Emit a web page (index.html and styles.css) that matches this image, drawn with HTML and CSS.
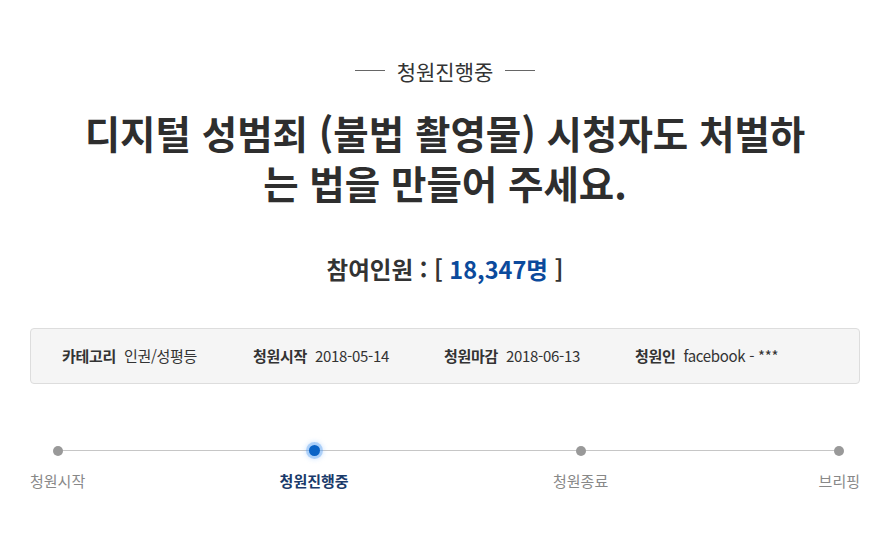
FILE: index.html
```html
<!DOCTYPE html>
<html lang="ko">
<head>
    <meta charset="UTF-8">
    <title>청원진행중</title>
    <link rel="stylesheet" href="styles.css">
</head>
<body>
    <div class="petition">
        <p class="status"><span>청원진행중</span></p>

        <h1 class="title">디지털 성범죄 (불법 촬영물) 시청자도 처벌하<br>는 법을 만들어 주세요.</h1>

        <p class="count">참여인원 : [ <span class="num">18,347명</span> ]</p>

        <ul class="info">
            <li><strong>카테고리</strong> 인권/성평등</li>
            <li><strong>청원시작</strong> 2018-05-14</li>
            <li><strong>청원마감</strong> 2018-06-13</li>
            <li><strong>청원인</strong> facebook - ***</li>
        </ul>

        <ol class="steps">
            <li class="step"><span class="dot"></span><span class="label">청원시작</span></li>
            <li class="step active"><span class="dot"></span><span class="label">청원진행중</span></li>
            <li class="step"><span class="dot"></span><span class="label">청원종료</span></li>
            <li class="step"><span class="dot"></span><span class="label">브리핑</span></li>
        </ol>
    </div>
</body>
</html>
```

FILE: styles.css
```css
body {
    margin: 0;
    font-family: "Noto Sans CJK KR", "Noto Sans", sans-serif;
    color: #333;
    background: #fff;
}
.petition {
    padding: 0 26px 0 30px;
}
.status {
    margin: 50px 0 0;
    text-align: center;
    font-size: 21px;
    line-height: 24px;
    color: #333;
}
.status span {
    display: inline-flex;
    align-items: center;
    gap: 12px;
}
.status span::before,
.status span::after {
    content: "";
    width: 30px;
    height: 1px;
    background: #666;
}
.title {
    margin: 24px 0 0;
    text-align: center;
    font-size: 38.5px;
    line-height: 50px;
    font-weight: 700;
    color: #2e2e2e;
}
.count {
    margin: 47px 0 0;
    text-align: center;
    font-size: 23.5px;
    line-height: 30px;
    font-weight: 700;
    color: #333;
}
.count .num {
    color: #0b4a9c;
}
.info {
    list-style: none;
    margin: 44px 0 0;
    padding: 0 0 0 31px;
    height: 54px;
    display: flex;
    align-items: center;
    background: #f5f5f5;
    border: 1px solid #ddd;
    border-radius: 4px;
    font-size: 15px;
    color: #333;
    letter-spacing: -0.3px;
}
.info li {
    width: 191px;
}
.info strong {
    font-weight: 700;
    margin-right: 4px;
}
.steps {
    list-style: none;
    position: relative;
    margin: 57px 0 0;
    padding: 0;
    display: flex;
    justify-content: space-between;
}
.steps::before {
    content: "";
    position: absolute;
    left: 27px;
    right: 21px;
    top: 9px;
    height: 1px;
    background: #c6c6c6;
}
.step {
    position: relative;
    z-index: 1;
    display: flex;
    flex-direction: column;
    align-items: center;
}
.step:nth-child(2) {
    margin-right: 10px;
}
.step:nth-child(3) {
    margin-right: 16px;
}
.dot {
    width: 10px;
    height: 10px;
    margin: 5px 0;
    border-radius: 50%;
    background: #999;
}
.label {
    margin-top: 10px;
    font-size: 15px;
    line-height: 20px;
    color: #888;
}
.active .dot {
    width: 11px;
    height: 11px;
    margin: 4px 0 5px;
    background: #0a63c6;
    box-shadow: 0 0 0 3px rgba(70, 150, 240, 0.35), 0 0 4px 4px rgba(120, 180, 250, 0.25);
}
.active .label {
    font-weight: 700;
    color: #1a3a6a;
    font-size: 15px;
}
```
